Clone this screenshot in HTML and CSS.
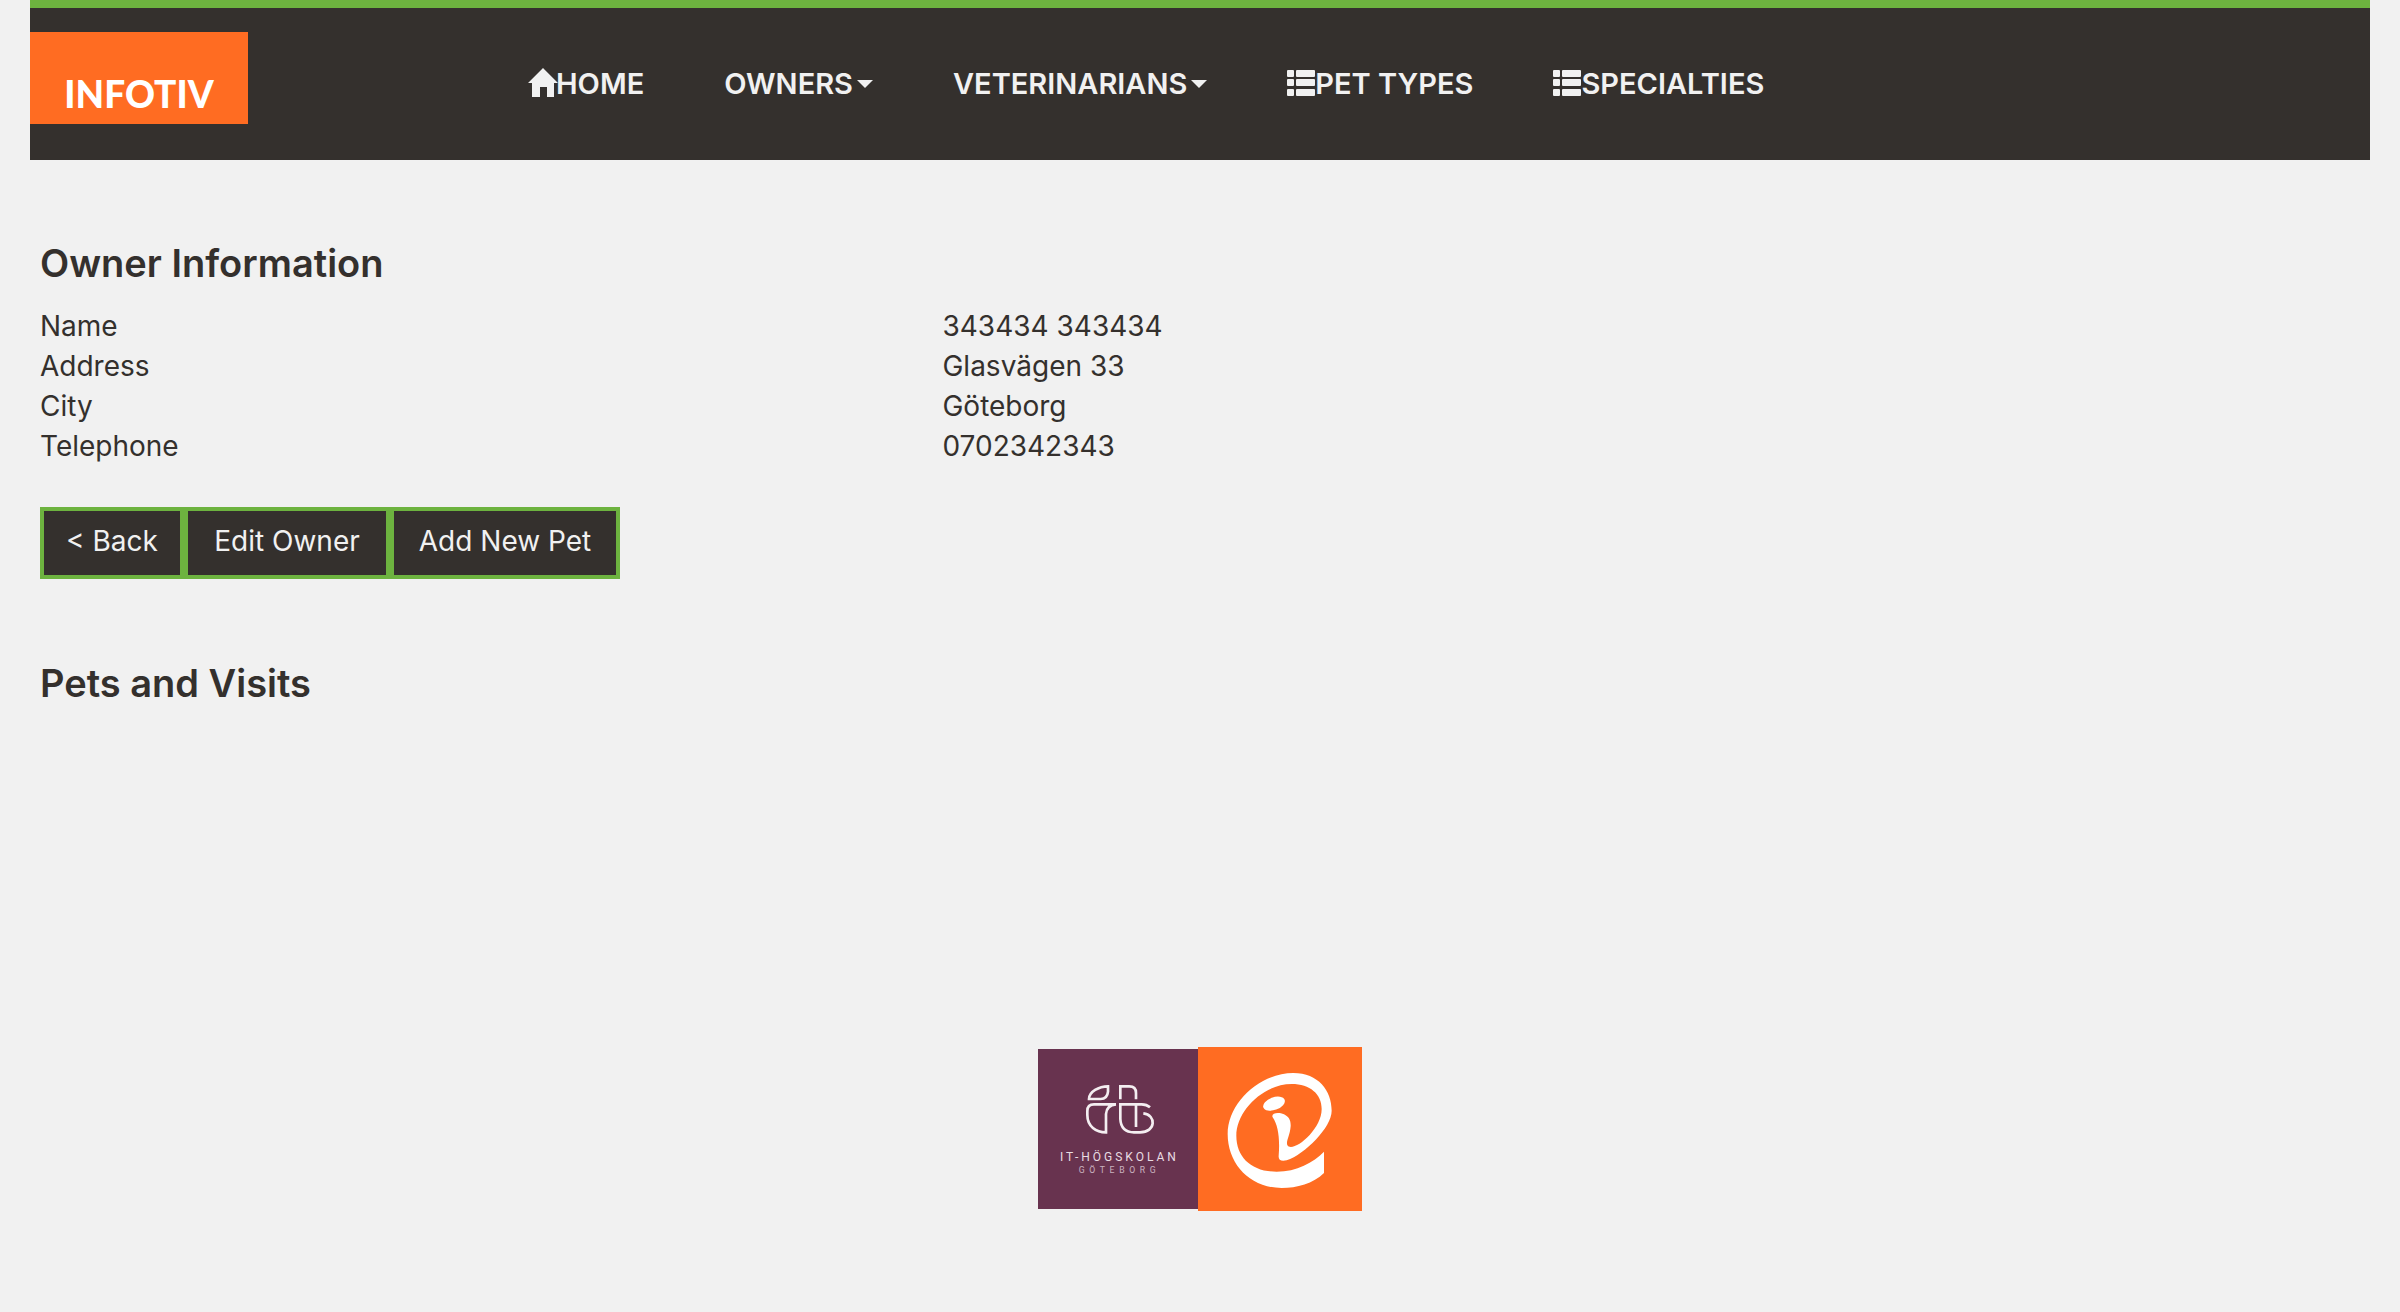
FILE: index.html
```html
<!DOCTYPE html>
<html lang="en">
<head>
<meta charset="utf-8">
<title>Owner Information</title>
<link rel="stylesheet" href="styles.css">
</head>
<body>
<svg class="symbols" aria-hidden="true">
  <symbol id="icon-list" viewBox="0 0 28 26">
    <rect x="0" y="0" width="7" height="7" rx="1"/><rect x="9" y="0" width="19" height="7" rx="1"/>
    <rect x="0" y="9" width="7" height="7" rx="1"/><rect x="9" y="9" width="19" height="7" rx="1"/>
    <rect x="0" y="19" width="7" height="7" rx="1"/><rect x="9" y="19" width="19" height="7" rx="1"/>
  </symbol>
</svg>
<header class="navbar">
  <a class="brand" href="#" aria-label="Infotiv"><span>INFOTIV</span></a>
  <nav class="menu">
    <a class="menu-item" href="#"><svg class="icon icon-home" viewBox="0 0 30 29"><path d="M15 0 30 15H26V29H19V19H12V29H4V15H0Z"/></svg>HOME</a>
    <button class="menu-item" type="button">OWNERS<span class="caret"></span></button>
    <button class="menu-item" type="button">VETERINARIANS<span class="caret"></span></button>
    <a class="menu-item" href="#"><svg class="icon icon-list"><use href="#icon-list"/></svg>PET TYPES</a>
    <a class="menu-item" href="#"><svg class="icon icon-list"><use href="#icon-list"/></svg>SPECIALTIES</a>
  </nav>
</header>
<main class="content">
  <h2>Owner Information</h2>
  <table class="details">
    <tr><th scope="row">Name</th><td>343434 343434</td></tr>
    <tr><th scope="row">Address</th><td>Glasvägen 33</td></tr>
    <tr><th scope="row">City</th><td>Göteborg</td></tr>
    <tr><th scope="row">Telephone</th><td>0702342343</td></tr>
  </table>
  <div class="actions">
    <button type="button">&lt; Back</button>
    <button type="button">Edit Owner</button>
    <button type="button">Add New Pet</button>
  </div>
  <h2>Pets and Visits</h2>
</main>
<footer class="logos">
  <svg class="logo-school" viewBox="24 30 480 480" role="img" aria-label="IT-Högskolan Göteborg">
    <g class="mark">
      <path d="M177 180C177 158 207 142 234 142V158Q232 180 212 180Z"/>
      <path d="M271 181V142H298Q318 142 318 162V181"/>
      <path d="M258 196H192Q172 196 172 216V228C172 262 198 280 228 280V225Q230 198 258 196"/>
      <path d="M360 205Q350 196 335 196H271V240Q273 280 312 280H330C378 280 380 228 340 223"/>
      <path d="M318 196V264"/>
    </g>
    <text class="school-name" x="90" y="365">IT-HÖGSKOLAN</text>
    <text class="school-city" x="146" y="401">GÖTEBORG</text>
  </svg>
  <svg class="logo-infotiv" viewBox="504 24 492 492" role="img" aria-label="Infotiv">
    <path d="M882 338V402C850 434 800 447 755 447C660 447 593 375 593 285C593 190 690 102 790 102C865 102 905 155 905 215C905 265 825 345 770 364C752 368 745 362 746 350C750 300 745 260 728 235C722 222 745 218 762 226C777 233 783 245 782 262C780 290 767 308 772 318C785 345 875 275 875 210C875 165 840 135 785 135C700 135 619 215 619 290C619 355 665 398 740 398C800 398 850 370 882 338Z"/>
    <ellipse cx="732" cy="194" rx="34" ry="19" transform="rotate(-20 732 194)"/>
  </svg>
</footer>
</body>
</html>
```
FILE: styles.css
```css
* { box-sizing: border-box; }

body {
  margin: 0;
  background: #f1f1f1;
  color: #34302d;
  font: 28px/40px Inter, "Open Sans", sans-serif;
}

.symbols { display: none; }

.navbar {
  display: flex;
  align-items: flex-start;
  margin: 0 30px;
  height: 160px;
  padding-top: 24px;
  border-top: 8px solid #6db33f;
  background: #34302d;
}

.brand {
  display: flex;
  justify-content: center;
  align-items: flex-end;
  width: 218px;
  height: 92px;
  padding-bottom: 10px;
  background: #ff6c22;
  color: #fff;
  font: 900 37px/40px Lato, sans-serif;
  text-decoration: none;
}

.menu {
  display: flex;
  margin-left: 240px;
  padding-top: 32px;
}

.menu-item {
  display: flex;
  align-items: center;
  padding: 0 40px;
  border: 0;
  background: none;
  color: #f1f1f1;
  font: 600 29px/40px Inter, sans-serif;
  text-decoration: none;
  white-space: nowrap;
}

.icon {
  width: 28px;
  margin-bottom: 2px;
  fill: currentColor;
}

.icon-home {
  height: 29px;
  width: 30px;
  margin-right: -2px;
  margin-bottom: 4px;
}

.icon-list { height: 26px; }

.caret {
  margin-left: 4px;
  border: 8px solid transparent;
  border-top-color: currentColor;
  border-bottom: 0;
}

.content { padding: 79px 40px 0; }

h2 {
  margin: 0;
  font: 600 38px/48px Inter, sans-serif;
}

.details {
  width: 100%;
  margin-top: 19px;
  border-collapse: collapse;
}

.details th,
.details td {
  padding: 0;
  font-weight: 400;
  text-align: left;
}

.details th { width: 38.9%; }

.actions {
  display: grid;
  grid-template-columns: 144px 206px 230px;
  margin: 41px 0 80px;
}

.actions button {
  height: 72px;
  padding: 0 0 4px;
  border: 4px solid #6db33f;
  background: #34302d;
  color: #f1f1f1;
  font: inherit;
}

.logos {
  display: flex;
  justify-content: center;
  align-items: center;
  margin-top: 340px;
  padding-bottom: 100px;
}

.logo-school {
  width: 160px;
  height: 160px;
  background: #68334f;
  fill: #e8dde3;
}

.mark {
  fill: none;
  stroke: #f4eef1;
  stroke-width: 8;
}

.school-name {
  font: 36px Roboto, sans-serif;
  letter-spacing: 9px;
}

.school-city {
  font: 26px Roboto, sans-serif;
  letter-spacing: 14px;
  opacity: 0.75;
}

.logo-infotiv {
  width: 164px;
  height: 164px;
  background: #ff6c22;
  fill: #fff;
}
```
